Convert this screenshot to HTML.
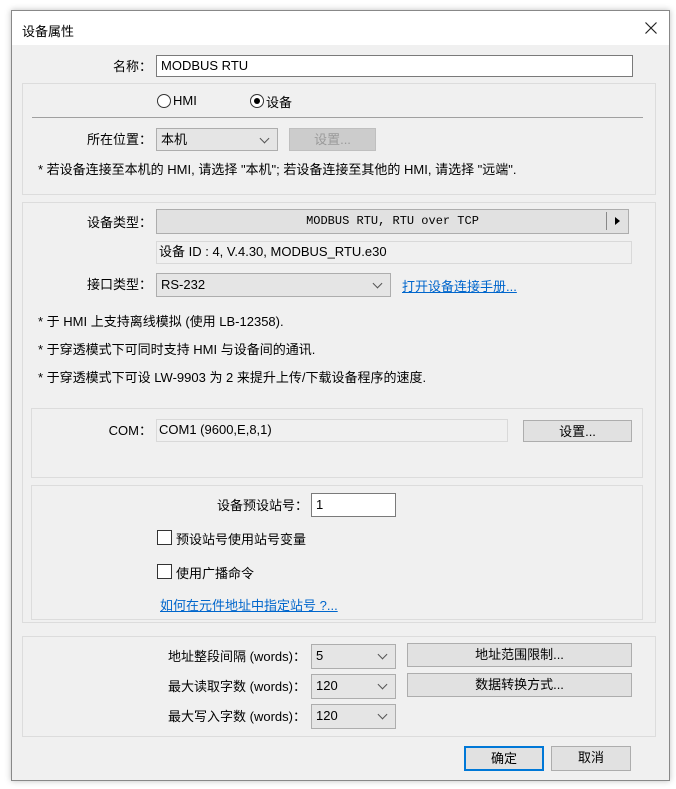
<!DOCTYPE html>
<html><head><meta charset="utf-8"><style>
*{box-sizing:border-box;margin:0;padding:0}
body{width:676px;height:789px;background:#fff;position:relative;font-family:"Liberation Sans","Noto Sans CJK SC",sans-serif;font-size:13px;color:#000;overflow:hidden}
.a{position:absolute}
.win{left:11px;top:10px;width:659px;height:771px;border:1px solid #888;background:#f0f0f0;box-shadow:0 0 6px rgba(0,0,0,.25)}
.title{left:12px;top:11px;width:657px;height:34px;background:#fff}
.grp{border:1px solid #dcdcdc}
.inp{background:#fff;border:1px solid #7a7a7a;padding-left:4px;line-height:20px}
.ro{background:#f0f0f0;border:1px solid #d9d9d9;padding-left:2px;line-height:20px}
.sel{background:#e5e5e5;border:1px solid #adadad;padding-left:4px;line-height:22px}
.sel:after{content:"";position:absolute;right:9px;top:6px;width:6px;height:6px;border-right:1px solid #555;border-bottom:1px solid #555;transform:rotate(45deg)}
.btn{background:#e1e1e1;border:1px solid #adadad;text-align:center;line-height:22px}
.lbl{text-align:right;line-height:20px}
.lnk{color:#0066cc;text-decoration:underline}
.cb{width:15px;height:15px;border:1px solid #333;background:#fff}
.rad{width:14px;height:14px;border:1px solid #333;border-radius:50%;background:#fff}
</style></head><body>
<div class="a win"></div>
<div class="a title"></div>
<div class="a" style="left:22px;top:21px">设备属性</div>
<svg class="a" style="left:645px;top:22px" width="12" height="12"><path d="M0.5 0.5L11.5 11.5M11.5 0.5L0.5 11.5" stroke="#222" stroke-width="1.2"/></svg>

<div class="a lbl" style="left:60px;top:57px;width:92px">名称：</div>
<div class="a inp" style="left:156px;top:55px;width:477px;height:22px">MODBUS RTU</div>

<div class="a grp" style="left:22px;top:83px;width:634px;height:112px"></div>
<div class="a rad" style="left:157px;top:94px"></div><div class="a" style="left:173px;top:93px">HMI</div>
<div class="a rad" style="left:250px;top:94px"></div><div class="a" style="left:254px;top:98px;width:6px;height:6px;border-radius:50%;background:#000"></div><div class="a" style="left:266px;top:92px">设备</div>
<div class="a" style="left:32px;top:117px;width:611px;height:1px;background:#a0a0a0"></div>
<div class="a lbl" style="left:60px;top:130px;width:92px">所在位置：</div>
<div class="a sel" style="left:156px;top:128px;width:122px;height:23px">本机</div>
<div class="a btn" style="left:289px;top:128px;width:87px;height:23px;color:#9a9a9a;background:#ccc;border-color:#bfbfbf">设置...</div>
<div class="a" style="left:38px;top:159px">* 若设备连接至本机的 HMI, 请选择 "本机"; 若设备连接至其他的 HMI, 请选择 "远端".</div>

<div class="a grp" style="left:22px;top:202px;width:634px;height:421px"></div>
<div class="a lbl" style="left:60px;top:213px;width:92px">设备类型：</div>
<div class="a btn" style="left:156px;top:209px;width:473px;height:25px;font-family:'Liberation Mono','Noto Sans CJK SC',monospace;font-size:12px">MODBUS RTU, RTU over TCP</div>
<div class="a" style="left:606px;top:212px;width:1px;height:18px;background:#888"></div>
<div class="a" style="left:615px;top:217px;width:0;height:0;border-left:5px solid #000;border-top:4px solid transparent;border-bottom:4px solid transparent"></div>
<div class="a ro" style="left:156px;top:241px;width:476px;height:23px">设备 ID : 4, V.4.30, MODBUS_RTU.e30</div>
<div class="a lbl" style="left:60px;top:275px;width:92px">接口类型：</div>
<div class="a sel" style="left:156px;top:273px;width:235px;height:24px">RS-232</div>
<div class="a lnk" style="left:402px;top:276px">打开设备连接手册...</div>
<div class="a" style="left:38px;top:311px">* 于 HMI 上支持离线模拟 (使用 LB-12358).</div>
<div class="a" style="left:38px;top:339px">* 于穿透模式下可同时支持 HMI 与设备间的通讯.</div>
<div class="a" style="left:38px;top:367px">* 于穿透模式下可设 LW-9903 为 2 来提升上传/下载设备程序的速度.</div>

<div class="a grp" style="left:31px;top:408px;width:612px;height:70px"></div>
<div class="a lbl" style="left:60px;top:421px;width:92px">COM：</div>
<div class="a ro" style="left:156px;top:419px;width:352px;height:23px">COM1 (9600,E,8,1)</div>
<div class="a btn" style="left:523px;top:420px;width:109px;height:22px">设置...</div>

<div class="a grp" style="left:31px;top:485px;width:612px;height:135px"></div>
<div class="a lbl" style="left:180px;top:496px;width:128px">设备预设站号：</div>
<div class="a inp" style="left:311px;top:493px;width:85px;height:24px;line-height:22px">1</div>
<div class="a cb" style="left:157px;top:530px"></div><div class="a" style="left:176px;top:529px">预设站号使用站号变量</div>
<div class="a cb" style="left:157px;top:564px"></div><div class="a" style="left:176px;top:563px">使用广播命令</div>
<div class="a lnk" style="left:160px;top:595px">如何在元件地址中指定站号 ?...</div>

<div class="a grp" style="left:22px;top:636px;width:634px;height:101px"></div>
<div class="a lbl" style="left:120px;top:647px;width:186px">地址整段间隔 (words)：</div>
<div class="a lbl" style="left:120px;top:677px;width:186px">最大读取字数 (words)：</div>
<div class="a lbl" style="left:120px;top:707px;width:186px">最大写入字数 (words)：</div>
<div class="a sel" style="left:311px;top:644px;width:85px;height:25px">5</div>
<div class="a sel" style="left:311px;top:674px;width:85px;height:25px">120</div>
<div class="a sel" style="left:311px;top:704px;width:85px;height:25px">120</div>
<div class="a btn" style="left:407px;top:643px;width:225px;height:24px">地址范围限制...</div>
<div class="a btn" style="left:407px;top:673px;width:225px;height:24px">数据转换方式...</div>

<div class="a btn" style="left:464px;top:746px;width:80px;height:25px;border:2px solid #0078d7;line-height:21px">确定</div>
<div class="a btn" style="left:551px;top:746px;width:80px;height:25px">取消</div>
</body></html>
